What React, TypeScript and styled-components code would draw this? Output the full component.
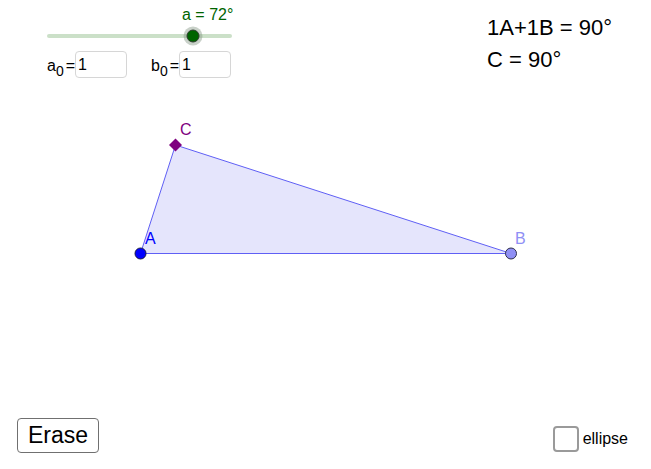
import styled, { createGlobalStyle } from 'styled-components'

const GlobalStyle = createGlobalStyle`
  html, body {
    margin: 0;
    padding: 0;
    background: #ffffff;
    overflow: hidden;
  }
  body {
    font-family: 'Liberation Sans', Arial, sans-serif;
    color: #000000;
  }
`

const SLIDER_MAX = 90
const SLIDER_WIDTH = 185

const Applet = styled.main`
  width: 651px;
  height: 469px;
  display: flex;
  flex-direction: column;
`

const TopBar = styled.div`
  height: 100px;
  display: flex;
  justify-content: space-between;
`

const Controls = styled.div`
  padding: 6px 0 0 47px;
  display: flex;
  flex-direction: column;
`

const SliderLabel = styled.div`
  margin-left: 135px;
  font-size: 16px;
  line-height: 18px;
  color: #006400;
`

const SliderTrack = styled.div`
  position: relative;
  margin-top: 10px;
  width: ${SLIDER_WIDTH}px;
  height: 4px;
  border-radius: 2px;
  background: #cbe0c8;
`

const SliderKnob = styled.div`
  position: absolute;
  top: 50%;
  width: 11px;
  height: 11px;
  border-radius: 50%;
  background: #006400;
  border: 1px solid #2b3b2b;
  box-shadow: 0 0 0 3px rgba(120, 140, 120, 0.4);
  transform: translate(-50%, -50%);
`

const InputRow = styled.div`
  margin-top: 13px;
  display: flex;
  align-items: center;
  gap: 24px;
`

const Field = styled.label`
  display: flex;
  align-items: center;
  font-size: 16px;
  gap: 0;
`

const FieldName = styled.span`
  display: inline-flex;
  align-items: baseline;
  margin-top: 2px;
`

const Sub = styled.span`
  position: relative;
  top: 5px;
  font-size: 14px;
  margin-right: 2px;
`

const NumberBox = styled.input`
  box-sizing: border-box;
  width: 52px;
  height: 27px;
  border: 1px solid #d6d6d6;
  border-radius: 4px;
  padding: 0 0 0 2px;
  font-family: 'Liberation Sans', Arial, sans-serif;
  font-size: 16px;
  color: #000;
  background: #fff;
  outline: none;
`

const Readout = styled.div`
  width: 164px;
  padding-top: 12px;
  font-size: 22px;
  line-height: 32px;
`

const Board = styled.svg`
  display: block;
  width: 651px;
  height: 300px;
`

const BottomBar = styled.div`
  flex: 1;
  display: flex;
  align-items: flex-start;
  padding: 18px 23px 0 17px;
`

const EraseButton = styled.button`
  box-sizing: border-box;
  height: 35px;
  padding: 0 10px;
  border: 1px solid #707070;
  border-radius: 4px;
  background: #ffffff;
  font-family: 'Liberation Sans', Arial, sans-serif;
  font-size: 23px;
  color: #000;
  cursor: pointer;
`

const CheckField = styled.label`
  margin: 8px 0 0 auto;
  display: flex;
  align-items: center;
  gap: 4px;
  font-size: 16px;
`

const CheckBox = styled.span`
  box-sizing: border-box;
  width: 26px;
  height: 26px;
  border: 2px solid #9a9a9a;
  border-radius: 4px;
  background: #fff;
`

export default function App() {
  const angle = 72
  const knobLeft = (angle / SLIDER_MAX) * SLIDER_WIDTH - 2

  return (
    <>
      <GlobalStyle />
      <Applet>
        <TopBar>
          <Controls>
            <SliderLabel>a = {angle}°</SliderLabel>
            <SliderTrack>
              <SliderKnob style={{ left: knobLeft }} />
            </SliderTrack>
            <InputRow>
              <Field>
                <FieldName>
                  a<Sub>0</Sub>=
                </FieldName>
                <NumberBox defaultValue="1" />
              </Field>
              <Field>
                <FieldName>
                  b<Sub>0</Sub>=
                </FieldName>
                <NumberBox defaultValue="1" />
              </Field>
            </InputRow>
          </Controls>
          <Readout>
            <div>1A+1B = 90°</div>
            <div>C = 90°</div>
          </Readout>
        </TopBar>

        <Board viewBox="0 0 651 300">
          <polygon
            points="140.5,153.5 511,153.5 175.5,45"
            fill="#e5e5fc"
            stroke="#5f5ff5"
            strokeWidth="1"
          />
          <circle cx="140.5" cy="153.5" r="5.5" fill="#0000ff" stroke="#1a1a40" strokeWidth="1" />
          <circle cx="511" cy="153.5" r="5.5" fill="#8f8ff5" stroke="#30304a" strokeWidth="1" />
          <rect
            x="170.9"
            y="40.4"
            width="9.2"
            height="9.2"
            fill="#7f007f"
            transform="rotate(45 175.5 45)"
          />
          <g fontFamily="'Liberation Sans', Arial, sans-serif" fontSize="16">
            <text x="180" y="35" fill="#7f007f">C</text>
            <text x="145" y="144" fill="#0000ff">A</text>
            <text x="515" y="144" fill="#8f8ff5">B</text>
          </g>
        </Board>

        <BottomBar>
          <EraseButton>Erase</EraseButton>
          <CheckField>
            <CheckBox />
            ellipse
          </CheckField>
        </BottomBar>
      </Applet>
    </>
  )
}
